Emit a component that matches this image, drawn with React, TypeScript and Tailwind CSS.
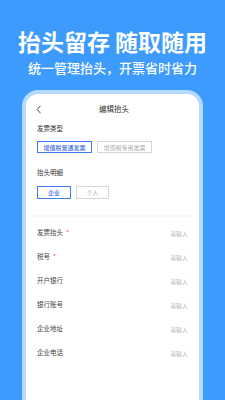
import React from "react";

const rows = [
  { label: "发票抬头", required: true },
  { label: "税号", required: true },
  { label: "开户银行", required: false },
  { label: "银行账号", required: false },
  { label: "企业地址", required: false },
  { label: "企业电话", required: false },
];

export default function App() {
  return (
    <div
      className="w-[225px] h-[400px] overflow-hidden bg-[#3c9bfd] flex flex-col"
      style={{ fontFamily: '"Noto Sans CJK SC", "Noto Sans", sans-serif' }}
    >
      <div className="pt-[28px] text-center text-white font-bold text-[23px] leading-[26px]">
        抬头留存 随取随用
      </div>
      <div className="mt-[6px] text-center text-white font-medium text-[13px] leading-[16px]">
        统一管理抬头，开票省时省力
      </div>

      {/* phone frame */}
      <div className="mt-[14px] ml-[22px] w-[181px] flex-1 rounded-t-[16px] border-[4px] border-b-0 border-[#b6dafe] bg-white">
        <div className="h-[30px] flex items-center pl-[10px] pr-[11px]">
          <svg width="6" height="9" viewBox="0 0 6 9" className="shrink-0">
            <polyline points="4.5,0.8 1.2,4.5 4.5,8.2" fill="none" stroke="#444" strokeWidth="1" />
          </svg>
          <div className="flex-1 text-center text-[7.5px] text-[#333] pl-[4px]">编辑抬头</div>
          <div className="w-[6px]" />
        </div>

        <div className="px-[11px]">
          <div className="h-[10px] flex items-center text-[6.5px] text-[#333]">发票类型</div>
          <div className="mt-[7px] h-[12px] flex gap-[5px]">
            <div className="w-[55px] h-[12px] border border-[#3f7cf0] text-[#3f6fe6] text-[6px] font-medium flex items-center justify-center">
              增值税普通发票
            </div>
            <div className="w-[55px] h-[12px] border border-[#d6d6d6] text-[#aaa] text-[6px] flex items-center justify-center">
              增值税专用发票
            </div>
          </div>

          <div className="mt-[15px] h-[10px] flex items-center text-[6.5px] text-[#333]">抬头明细</div>
          <div className="mt-[8px] h-[13px] flex gap-[5px]">
            <div className="w-[34px] h-[13px] border border-[#3f7cf0] text-[#3f6fe6] text-[6px] font-medium flex items-center justify-center">
              企业
            </div>
            <div className="w-[33px] h-[13px] border border-[#d6d6d6] text-[#aaa] text-[6px] flex items-center justify-center">
              个人
            </div>
          </div>
        </div>

        <div className="mt-[16px] mx-[7px] h-[2px] bg-[#f7f8fa]" />

        <div className="mt-[4px] px-[11px]">
          {rows.map((r) => (
            <div key={r.label} className="h-[24px] flex items-center justify-between">
              <div className="text-[6.5px] text-[#444]">
                {r.label}
                {r.required && <span className="ml-[3px] text-[#f04b4b]">*</span>}
              </div>
              <div className="text-[6px] text-[#b5b5b5]">请输入</div>
            </div>
          ))}
        </div>
      </div>
    </div>
  );
}
